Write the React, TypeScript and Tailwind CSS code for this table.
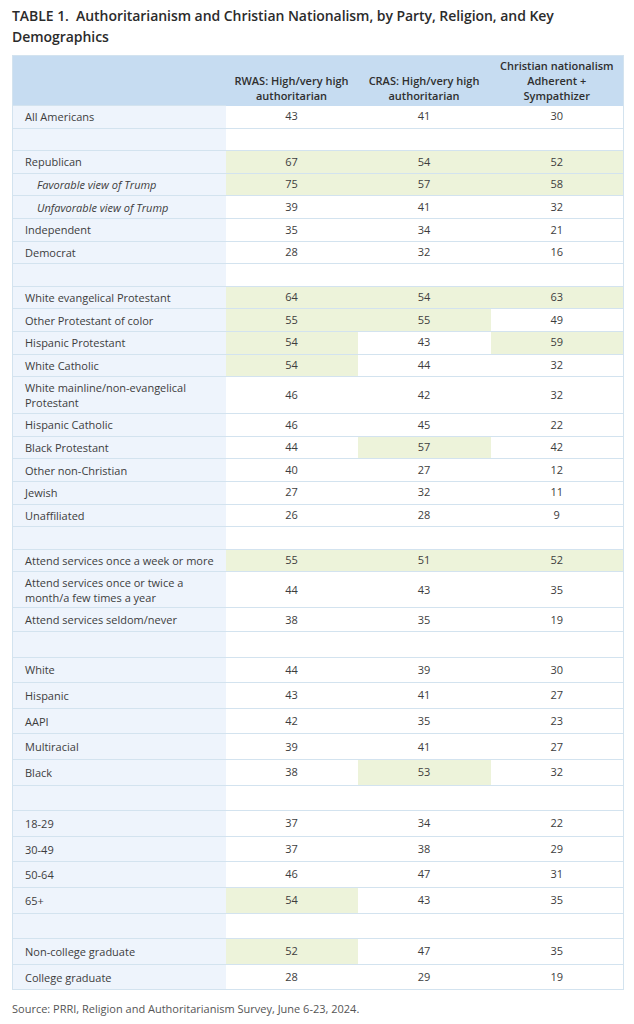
import React from 'react';

// Tabla de autoritarismo y nacionalismo cristiano (PRRI 2024)

type Row = {
  label?: string;
  values?: [number, number, number];
  hi?: [boolean, boolean, boolean];
  italic?: boolean;
  h: string;
};

const N: [boolean, boolean, boolean] = [false, false, false];

const rows: Row[] = [
  { label: 'All Americans', values: [43, 41, 30], h: 'h-[22.6px]' },
  { h: 'h-[22.6px]' },
  { label: 'Republican', values: [67, 54, 52], hi: [true, true, true], h: 'h-[22.6px]' },
  { label: 'Favorable view of Trump', values: [75, 57, 58], hi: [true, true, true], italic: true, h: 'h-[22.6px]' },
  { label: 'Unfavorable view of Trump', values: [39, 41, 32], italic: true, h: 'h-[22.6px]' },
  { label: 'Independent', values: [35, 34, 21], h: 'h-[22.6px]' },
  { label: 'Democrat', values: [28, 32, 16], h: 'h-[22.6px]' },
  { h: 'h-[22.6px]' },
  { label: 'White evangelical Protestant', values: [64, 54, 63], hi: [true, true, true], h: 'h-[22.6px]' },
  { label: 'Other Protestant of color', values: [55, 55, 49], hi: [true, true, false], h: 'h-[22.6px]' },
  { label: 'Hispanic Protestant', values: [54, 43, 59], hi: [true, false, true], h: 'h-[22.6px]' },
  { label: 'White Catholic', values: [54, 44, 32], hi: [true, false, false], h: 'h-[22.6px]' },
  { label: 'White mainline/non-evangelical Protestant', values: [46, 42, 32], h: 'h-[37px]' },
  { label: 'Hispanic Catholic', values: [46, 45, 22], h: 'h-[22.6px]' },
  { label: 'Black Protestant', values: [44, 57, 42], hi: [false, true, false], h: 'h-[22.6px]' },
  { label: 'Other non-Christian', values: [40, 27, 12], h: 'h-[22.6px]' },
  { label: 'Jewish', values: [27, 32, 11], h: 'h-[22.6px]' },
  { label: 'Unaffiliated', values: [26, 28, 9], h: 'h-[22.6px]' },
  { h: 'h-[22.6px]' },
  { label: 'Attend services once a week or more', values: [55, 51, 52], hi: [true, true, true], h: 'h-[22.6px]' },
  { label: 'Attend services once or twice a month/a few times a year', values: [44, 43, 35], h: 'h-[36px]' },
  { label: 'Attend services seldom/never', values: [38, 35, 19], h: 'h-[24px]' },
  { h: 'h-[25.4px]' },
  { label: 'White', values: [44, 39, 30], h: 'h-[25.6px] pt-[2px]' },
  { label: 'Hispanic', values: [43, 41, 27], h: 'h-[25.6px] pt-[2px]' },
  { label: 'AAPI', values: [42, 35, 23], h: 'h-[25.6px] pt-[2px]' },
  { label: 'Multiracial', values: [39, 41, 27], h: 'h-[25.6px] pt-[2px]' },
  { label: 'Black', values: [38, 53, 32], hi: [false, true, false], h: 'h-[25.6px] pt-[2px]' },
  { h: 'h-[25.6px]' },
  { label: '18-29', values: [37, 34, 22], h: 'h-[25.6px] pt-[2px]' },
  { label: '30-49', values: [37, 38, 29], h: 'h-[25.6px] pt-[2px]' },
  { label: '50-64', values: [46, 47, 31], h: 'h-[25.6px] pt-[2px]' },
  { label: '65+', values: [54, 43, 35], hi: [true, false, false], h: 'h-[25.6px] pt-[2px]' },
  { h: 'h-[25.6px]' },
  { label: 'Non-college graduate', values: [52, 47, 35], hi: [true, false, false], h: 'h-[25.6px] pt-[2px]' },
  { label: 'College graduate', values: [28, 29, 19], h: 'h-[25.6px] pt-[2px]' },
];

export default function App() {
  return (
    <div
      className="w-[634px] h-[1024px] bg-white text-[#3d3d3d] overflow-hidden"
      style={{ fontFamily: '"Open Sans", "Liberation Sans", sans-serif' }}
    >
      <h1 className="pl-[12px] pt-[5px] text-[14px] leading-[21px] font-semibold text-[#2b2b2b] tracking-[-0.05px]">
        TABLE 1.&nbsp; Authoritarianism and Christian Nationalism, by Party, Religion, and Key
        <br />
        Demographics
      </h1>

      <table className="ml-[12px] mt-[8px] w-[611px] border-collapse border border-[#d3e3ef] text-[11px] table-fixed">
        <colgroup>
          <col className="w-[213px]" />
          <col className="w-[132px]" />
          <col className="w-[133px]" />
          <col className="w-[133px]" />
        </colgroup>
        <thead>
          <tr className="h-[50px] bg-[#c6dcf1] text-[#2f2f2f] font-semibold leading-[15px]">
            <th className="border-b border-[#d3e3ef]" />
            <th className="align-bottom pb-[3px] text-center font-semibold">
              RWAS: High/very high
              <br />
              authoritarian
            </th>
            <th className="align-bottom pb-[3px] text-center font-semibold">
              CRAS: High/very high
              <br />
              authoritarian
            </th>
            <th className="align-bottom pb-[3px] text-center font-semibold">
              Christian nationalism
              <br />
              Adherent +
              <br />
              Sympathizer
            </th>
          </tr>
        </thead>
        <tbody>
          {rows.map((r, i) => {
            const hi = r.hi ?? N;
            return (
              <tr key={i} className={`${r.h} border-b border-[#d3e3ef]`}>
                <td
                  className={`bg-[#eef4fc] leading-[15px] pr-[8px] ${
                    r.italic ? 'italic pl-[24px]' : 'pl-[12px]'
                  }`}
                >
                  {r.label}
                </td>
                {[0, 1, 2].map((c) => (
                  <td
                    key={c}
                    className={`text-center ${hi[c] ? 'bg-[#edf3da]' : 'bg-white'}`}
                  >
                    {r.values ? r.values[c] : ''}
                  </td>
                ))}
              </tr>
            );
          })}
        </tbody>
      </table>

      <p className="pl-[12px] mt-[11px] text-[11px] text-[#555]">
        Source: PRRI, Religion and Authoritarianism Survey, June 6-23, 2024.
      </p>
    </div>
  );
}
